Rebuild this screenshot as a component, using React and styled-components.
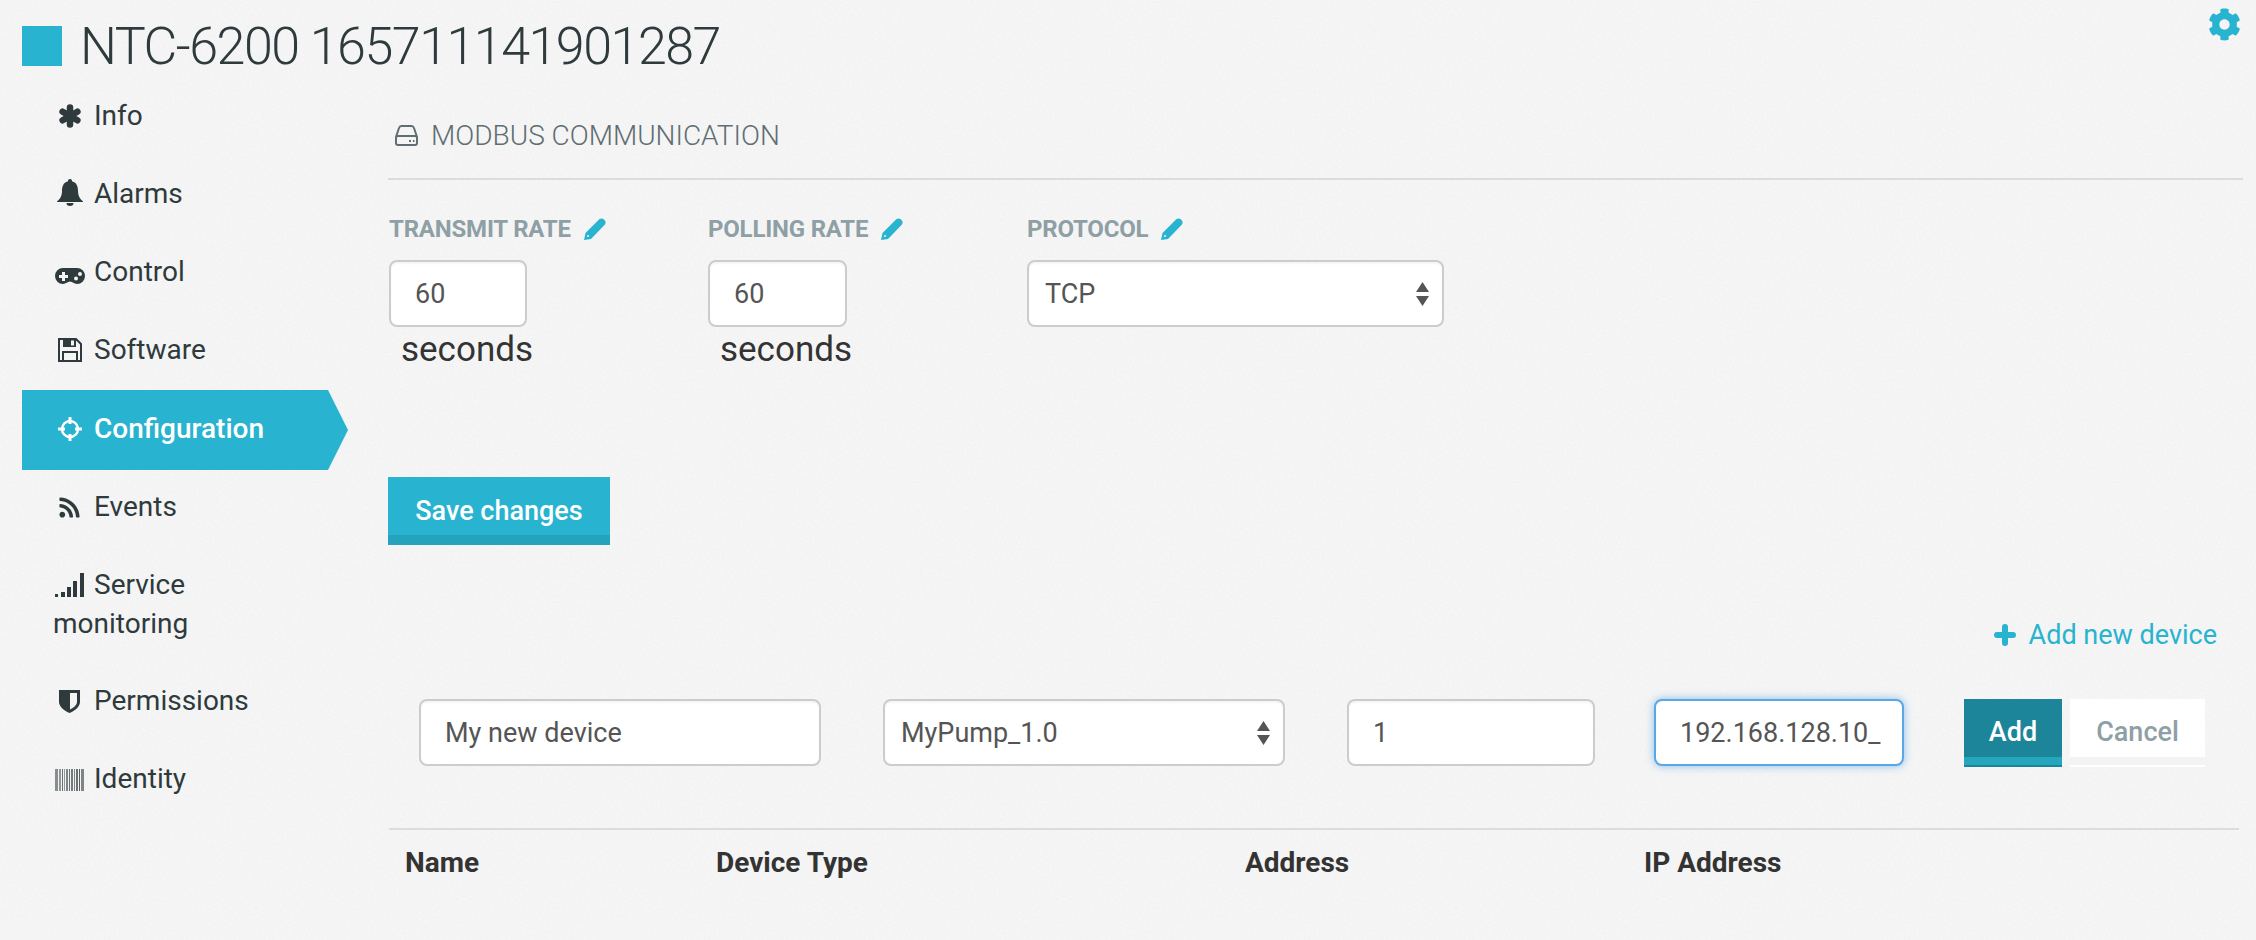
import React from 'react'
import styled, { createGlobalStyle } from 'styled-components'
import { FaRss, FaCog } from 'react-icons/fa'

const noise = `url("data:image/svg+xml,%3Csvg xmlns='http://www.w3.org/2000/svg' width='300' height='300'%3E%3Cfilter id='n'%3E%3CfeTurbulence type='fractalNoise' baseFrequency='.5' numOctaves='3'/%3E%3CfeColorMatrix values='1 0 0 0 0 1 0 0 0 0 1 0 0 0 0 0 0 0 0 .05'/%3E%3C/filter%3E%3Crect width='300' height='300' filter='url(%23n)'/%3E%3C/svg%3E")`
const arrows = `url("data:image/svg+xml,%3Csvg xmlns='http://www.w3.org/2000/svg' width='13' height='24'%3E%3Cpath d='M6.5 0L13 10H0zM0 14h13L6.5 24z' fill='%23555'/%3E%3C/svg%3E")`

const GlobalStyle = createGlobalStyle`
  html, body {
    margin: 0;
    background-color: #f8f8f8;
    background-image: ${noise};
    font-family: Roboto, "Liberation Sans", sans-serif;
    color: #2e3a3c;
  }
  * { box-sizing: border-box; }
`

const Page = styled.div`
  width: 2256px;
  height: 940px;
  overflow: hidden;
`

const Header = styled.header`
  height: 78px;
  display: flex;
  justify-content: space-between;
  align-items: flex-start;
  padding: 8px 15px 0 22px;
`

const TitleGroup = styled.div`
  display: flex;
  align-items: center;
  gap: 18px;
  margin-top: 16px;
`

const Square = styled.span`
  width: 40px;
  height: 40px;
  background: #28b3d0;
`

const Title = styled.h1`
  margin: 0;
  padding-top: 3px;
  font-size: 52px;
  line-height: 40px;
  font-weight: 300;
  color: #2e3a3c;
  letter-spacing: -1.5px;
  white-space: nowrap;
`

const Gear = styled(FaCog)`
  width: 33px;
  height: 33px;
  color: #28b3d0;
`

const Body = styled.div`
  display: flex;
`

const Nav = styled.nav`
  width: 388px;
  padding-left: 22px;
  flex: none;
`

const NavItem = styled.div`
  width: 326px;
  min-height: ${p => (p.$active ? '80px' : '78px')};
  margin: ${p => (p.$active ? '0 0 -1px' : '0')};
  padding: ${p => (p.$active ? '19px' : '18px')} 0 0 31px;
  font-size: 28px;
  line-height: 39px;
  color: ${p => (p.$active ? '#fff' : '#2e3a3c')};
  font-weight: ${p => (p.$active ? 500 : 400)};
  background: ${p => (p.$active ? '#28b3d0' : 'transparent')};
  clip-path: ${p => (p.$active ? 'polygon(0 0, 306px 0, 326px 50%, 306px 100%, 0 100%)' : 'none')};
  padding-bottom: ${p => (p.$wrap ? '20px' : '0')};
`

const NavIcon = styled.span`
  display: inline-flex;
  justify-content: center;
  align-items: center;
  width: 29px;
  height: 24px;
  margin: 0 10px 0 2px;
  vertical-align: -3px;
  svg { display: block; flex: none; }
`

const Main = styled.main`
  flex: 1;
  min-width: 0;
  padding-right: 13px;
`

const SectionHead = styled.div`
  display: flex;
  align-items: center;
  gap: 13px;
  height: 102px;
  padding: 38px 0 24px 7px;
  border-bottom: 2px solid #dcdcdc;
  font-size: 28px;
  font-weight: 300;
  color: #5f6e72;
`

const Fields = styled.div`
  display: grid;
  grid-template-columns: 319px 319px 417px;
  margin-top: 35px;
  padding-left: 1px;
`

const Label = styled.label`
  display: flex;
  align-items: center;
  gap: 13px;
  height: 28px;
  margin-bottom: 17px;
  font-size: 24px;
  letter-spacing: -.2px;
  font-weight: 700;
  color: #8e9fa5;
`

const fieldCss = `
  height: 67px;
  background-color: #fff;
  border: 2px solid #ccc;
  border-radius: 8px;
  box-shadow: inset 0 2px 2px rgba(0,0,0,.04);
  font-family: Roboto, "Liberation Sans", sans-serif;
  font-size: 27px;
  color: #555;
  outline: none;
  display: block;
`

const TextInput = styled.input`
  ${fieldCss}
  width: ${p => p.$w}px;
  padding: 0 0 0 24px;
  ${p => p.$focus && `
    border-color: #5aa7e6;
    box-shadow: 0 0 8px rgba(90,167,230,.7);
  `}
`

const Select = styled.select`
  ${fieldCss}
  appearance: none;
  width: ${p => p.$w}px;
  padding: 0 0 0 16px;
  background-image: ${arrows};
  background-repeat: no-repeat;
  background-position: right 13px center;
`

const Unit = styled.div`
  margin-top: 3px;
  padding-left: 12px;
  font-size: 35px;
  line-height: 40px;
  color: #333;
`

const SaveButton = styled.button`
  display: block;
  width: 222px;
  height: 68px;
  margin-top: 107px;
  border: 0;
  padding: 0 0 1px;
  background: #28b3d0;
  box-shadow: inset 0 -10px 0 #25a3bc;
  color: #fff;
  font: 500 27px Roboto, "Liberation Sans", sans-serif;
`

const AddLink = styled.div`
  display: flex;
  justify-content: flex-end;
  align-items: center;
  gap: 13px;
  margin-top: 70px;
  padding-right: 26px;
  font-size: 27px;
  line-height: 40px;
  color: #28b3d0;
`

const FormRow = styled.div`
  display: flex;
  margin-top: 44px;
  padding-left: 31px;
`

const Gap = styled.span`
  width: ${p => p.$w}px;
  flex: none;
`

const ActionButton = styled.button`
  width: ${p => p.$w}px;
  height: 68px;
  flex: none;
  border: 0;
  padding: 0 0 2px;
  font: 500 27px Roboto, "Liberation Sans", sans-serif;
  background: ${p => (p.$primary ? '#1d8599' : '#fff')};
  color: ${p => (p.$primary ? '#fff' : '#8e9fa5')};
  box-shadow: inset 0 -2px 0 ${p => (p.$primary ? '#1d8599' : '#fff')},
    inset 0 -10px 0 ${p => (p.$primary ? '#25a5be' : '#f3f3f3')};
`

const Divider = styled.div`
  height: 2px;
  margin: 61px 4px 0 1px;
  background: #dcdcdc;
`

const TableHead = styled.div`
  display: grid;
  grid-template-columns: 311px 529px 399px 1fr;
  margin-top: 13px;
  padding-left: 17px;
  font-size: 28px;
  line-height: 40px;
  font-weight: 700;
  color: #333;
`

const AsteriskIcon = () => (
  <svg width="24" height="24" viewBox="0 0 24 24" fill="none" stroke="currentColor" strokeWidth="6.500" strokeLinecap="round">
    <path d="M12 3.500v17M4.600 7.700l14.800 8.600M4.600 16.300l14.800-8.600" />
  </svg>
)

const BellIcon = () => (
  <svg width="26" height="27" viewBox="0 0 26 27" fill="currentColor">
    <path d="M13 0a2 2 0 0 1 2 2.200C20 3.500 21 8 21 12c0 5 2 8 5 10.500V23H0v-.5C3 20 5 17 5 12c0-4 1-8.500 6-9.800A2 2 0 0 1 13 0z" />
    <path d="M9.500 24h7a3.500 3 0 0 1-7 0z" />
  </svg>
)

const GamepadIcon = () => (
  <svg width="30" height="16" viewBox="0 0 30 16">
    <path d="M8 0h14a8 8 0 0 1 0 16c-3 0-4.500-2.500-7-2.500S11 16 8 16A8 8 0 0 1 8 0z" fill="currentColor" />
    <path d="M7 4h3v3h3v3h-3v3H7v-3H4V7h3z" fill="#f4f4f4" />
    <circle cx="21" cy="10.500" r="2" fill="#f4f4f4" />
    <circle cx="25" cy="6" r="2" fill="#f4f4f4" />
  </svg>
)

const SaveIcon = () => (
  <svg width="24" height="24" viewBox="0 0 24 24">
    <path d="M1 1h17l5 5v17H1z" fill="none" stroke="currentColor" strokeWidth="2" />
    <path d="M5 1h13v8H5z" fill="currentColor" />
    <path d="M13 2.500h3v5h-3z" fill="#f4f4f4" />
    <path d="M5 23v-9h14v9" fill="none" stroke="currentColor" strokeWidth="2" />
  </svg>
)

const CrosshairIcon = () => (
  <svg width="24" height="24" viewBox="0 0 24 24" fill="none" stroke="currentColor">
    <circle cx="12" cy="12" r="8" strokeWidth="2.400" />
    <path d="M12 0v7M12 17v7M0 12h7M17 12h7" strokeWidth="3" />
  </svg>
)

const SignalIcon = () => (
  <svg width="29" height="24" viewBox="0 0 29 24" fill="currentColor">
    <rect x="0" y="21" width="3" height="3" />
    <rect x="6" y="19" width="4" height="5" />
    <rect x="12" y="14" width="4" height="10" />
    <rect x="18" y="8" width="4" height="16" />
    <rect x="25" y="0" width="4" height="24" />
  </svg>
)

const ShieldIcon = () => (
  <svg width="21" height="24" viewBox="0 0 21 24">
    <path d="M0 1h21v12c0 5-6 9-10.500 11C6 22 0 18 0 13z" fill="currentColor" />
    <path d="M11 4h7v9c0 3-3.500 5.800-7 7.500z" fill="#f4f4f4" />
  </svg>
)

const BarcodeIcon = () => (
  <svg width="29" height="22" viewBox="0 0 29 22" fill="currentColor">
    {[[0, 3, .55], [4, 2, .5], [7, 1, .7], [9, 1, .5], [11, 2, .6], [14, 1, .7], [16, 2, .65], [19, 1, .6], [21, 2, .7], [24, 1, .8], [26, 3, .6]].map(([x, w, o]) => (
      <rect key={x} x={x} y="0" width={w} height="22" opacity={o} />
    ))}
  </svg>
)

const HddIcon = () => (
  <svg width="23" height="21" viewBox="0 0 23 21" fill="none" stroke="currentColor" strokeWidth="2">
    <path d="M1 12L4 3c.4-1.300 1.200-2 2.500-2h10c1.300 0 2.100.7 2.500 2l3 9" />
    <rect x="1" y="11" width="21" height="9" rx="2" />
    <path d="M14 16h2M18 16h1.500" strokeWidth="2.200" />
  </svg>
)

const PencilIcon = () => (
  <svg width="22" height="22" viewBox="0 0 22 22" fill="#28b3d0" style={{ flex: 'none' }}>
    <path d="M0 22l1.500-7L15 1.500c1.500-1.500 3.500-1.500 5 0l.5.500c1.500 1.500 1.500 3.500 0 5L7 21z" />
    <circle cx="4" cy="18" r="1" fill="#f4f4f4" />
  </svg>
)

const PlusIcon = () => (
  <svg width="22" height="22" viewBox="0 0 22 22" fill="none" stroke="#28b3d0" strokeWidth="6" strokeLinecap="round">
    <path d="M11 3v16M3 11h16" />
  </svg>
)

const items = [
  { label: 'Info', icon: <AsteriskIcon /> },
  { label: 'Alarms', icon: <BellIcon /> },
  { label: 'Control', icon: <GamepadIcon /> },
  { label: 'Software', icon: <SaveIcon /> },
  { label: 'Configuration', icon: <CrosshairIcon />, active: true },
  { label: 'Events', icon: <FaRss size={23} /> },
  { label: 'Service monitoring', icon: <SignalIcon />, wrap: true },
  { label: 'Permissions', icon: <ShieldIcon /> },
  { label: 'Identity', icon: <BarcodeIcon /> },
]

export default function App() {
  return (
    <Page>
      <GlobalStyle />
      <Header>
        <TitleGroup>
          <Square />
          <Title>NTC-6200 165711141901287</Title>
        </TitleGroup>
        <Gear />
      </Header>
      <Body>
        <Nav>
          {items.map(item => (
            <NavItem key={item.label} $active={item.active} $wrap={item.wrap}>
              <NavIcon>{item.icon}</NavIcon>
              {item.wrap ? <>Service<br />monitoring</> : item.label}
            </NavItem>
          ))}
        </Nav>
        <Main>
          <SectionHead><HddIcon />MODBUS COMMUNICATION</SectionHead>
          <Fields>
            <div>
              <Label>TRANSMIT RATE <PencilIcon /></Label>
              <TextInput $w={138} value="60" readOnly />
              <Unit>seconds</Unit>
            </div>
            <div>
              <Label>POLLING RATE <PencilIcon /></Label>
              <TextInput $w={139} value="60" readOnly />
              <Unit>seconds</Unit>
            </div>
            <div>
              <Label>PROTOCOL <PencilIcon /></Label>
              <Select $w={417} defaultValue="TCP"><option>TCP</option></Select>
            </div>
          </Fields>
          <SaveButton>Save changes</SaveButton>
          <AddLink><PlusIcon />Add new device</AddLink>
          <FormRow>
            <TextInput $w={402} value="My new device" readOnly />
            <Gap $w={62} />
            <Select $w={402} defaultValue="MyPump_1.0"><option>MyPump_1.0</option></Select>
            <Gap $w={62} />
            <TextInput $w={248} value="1" readOnly />
            <Gap $w={59} />
            <TextInput $w={250} value="192.168.128.10_" readOnly $focus />
            <Gap $w={60} />
            <ActionButton $w={98} $primary>Add</ActionButton>
            <Gap $w={8} />
            <ActionButton $w={135}>Cancel</ActionButton>
          </FormRow>
          <Divider />
          <TableHead>
            <span>Name</span>
            <span>Device Type</span>
            <span>Address</span>
            <span>IP Address</span>
          </TableHead>
        </Main>
      </Body>
    </Page>
  )
}
